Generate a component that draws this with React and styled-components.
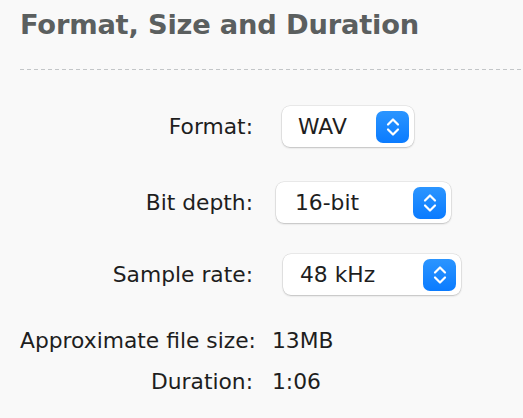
import React from 'react';
import styled, { createGlobalStyle } from 'styled-components';

const GlobalStyle = createGlobalStyle`
  html, body {
    margin: 0;
    padding: 0;
    background: #f9f9f9;
  }
  body {
    font-family: "DejaVu Sans", "Liberation Sans", sans-serif;
    color: #222;
  }
`;

const Page = styled.div`
  width: 523px;
  height: 418px;
  overflow: hidden;
  padding-top: 8px;
  box-sizing: border-box;
`;

const Heading = styled.h2`
  margin: 0 0 0 20px;
  font-size: 27.3px;
  line-height: 34px;
  font-weight: bold;
  color: #5b5f5f;
  letter-spacing: -0.2px;
`;

const Divider = styled.div`
  margin: 27px 0 0 20px;
  height: 1px;
  background-image: linear-gradient(to right, #c3c6c8 0 4px, transparent 4px 7px);
  background-size: 7px 1px;
  background-repeat: repeat-x;
`;

const Form = styled.div`
  display: grid;
  grid-template-columns: 233px 1fr;
  margin: 36px 0 0 20px;
  align-items: center;
`;

const Label = styled.div`
  text-align: right;
  font-size: 21.8px;
  color: #1e1e1e;
  height: ${p => p.$h || 41}px;
  line-height: ${p => p.$h || 41}px;
  margin-bottom: ${p => p.$mb || 0}px;
  white-space: nowrap;
`;

const Value = styled.div`
  height: ${p => p.$h || 41}px;
  line-height: ${p => p.$h || 41}px;
  margin-bottom: ${p => p.$mb || 0}px;
  padding-left: ${p => p.$indent}px;
  font-size: 21.8px;
  color: #1e1e1e;
  display: flex;
  align-items: center;
`;

const Select = styled.div`
  box-sizing: border-box;
  width: ${p => p.$w}px;
  height: 41px;
  background: #fff;
  border-radius: 8px;
  box-shadow: 0 0 0 0.5px rgba(0, 0, 0, 0.12), 0 1px 2px rgba(0, 0, 0, 0.18);
  display: flex;
  align-items: center;
  justify-content: space-between;
  padding: 0 5px 0 ${p => p.$pl}px;
  font-size: 21.8px;
  color: #1e1e1e;
`;

const Stepper = styled.div`
  width: 33px;
  height: 32px;
  border-radius: 7px;
  background: linear-gradient(#2b95ff, #0a7bff);
  display: flex;
  align-items: center;
  justify-content: center;
`;

const Chevrons = () => (
  <svg width="16" height="22" viewBox="0 0 16 22" fill="none">
    <path d="M3 8.5 L8 3.5 L13 8.5" stroke="#fff" strokeWidth="2.2" strokeLinecap="round" strokeLinejoin="round" />
    <path d="M3 13.5 L8 18.5 L13 13.5" stroke="#fff" strokeWidth="2.2" strokeLinecap="round" strokeLinejoin="round" />
  </svg>
);

const Dropdown = ({ value, width, pl }) => (
  <Select $w={width} $pl={pl}>
    <span>{value}</span>
    <Stepper>
      <Chevrons />
    </Stepper>
  </Select>
);

export default function App() {
  return (
    <Page>
      <GlobalStyle />
      <Heading>Format, Size and Duration</Heading>
      <Divider />
      <Form>
        <Label $mb={35}>Format:</Label>
        <Value $mb={35} $indent={29}>
          <Dropdown value="WAV" width={132} pl={16} />
        </Value>

        <Label $mb={31}>Bit depth:</Label>
        <Value $mb={31} $indent={23}>
          <Dropdown value="16-bit" width={175} pl={19} />
        </Value>

        <Label $mb={32}>Sample rate:</Label>
        <Value $mb={32} $indent={30}>
          <Dropdown value="48 kHz" width={178} pl={17} />
        </Value>

        <Label $h={28} $mb={13}>Approximate file size:</Label>
        <Value $h={28} $mb={13} $indent={19}>13MB</Value>

        <Label $h={28}>Duration:</Label>
        <Value $h={28} $indent={19}>1:06</Value>
      </Form>
    </Page>
  );
}
